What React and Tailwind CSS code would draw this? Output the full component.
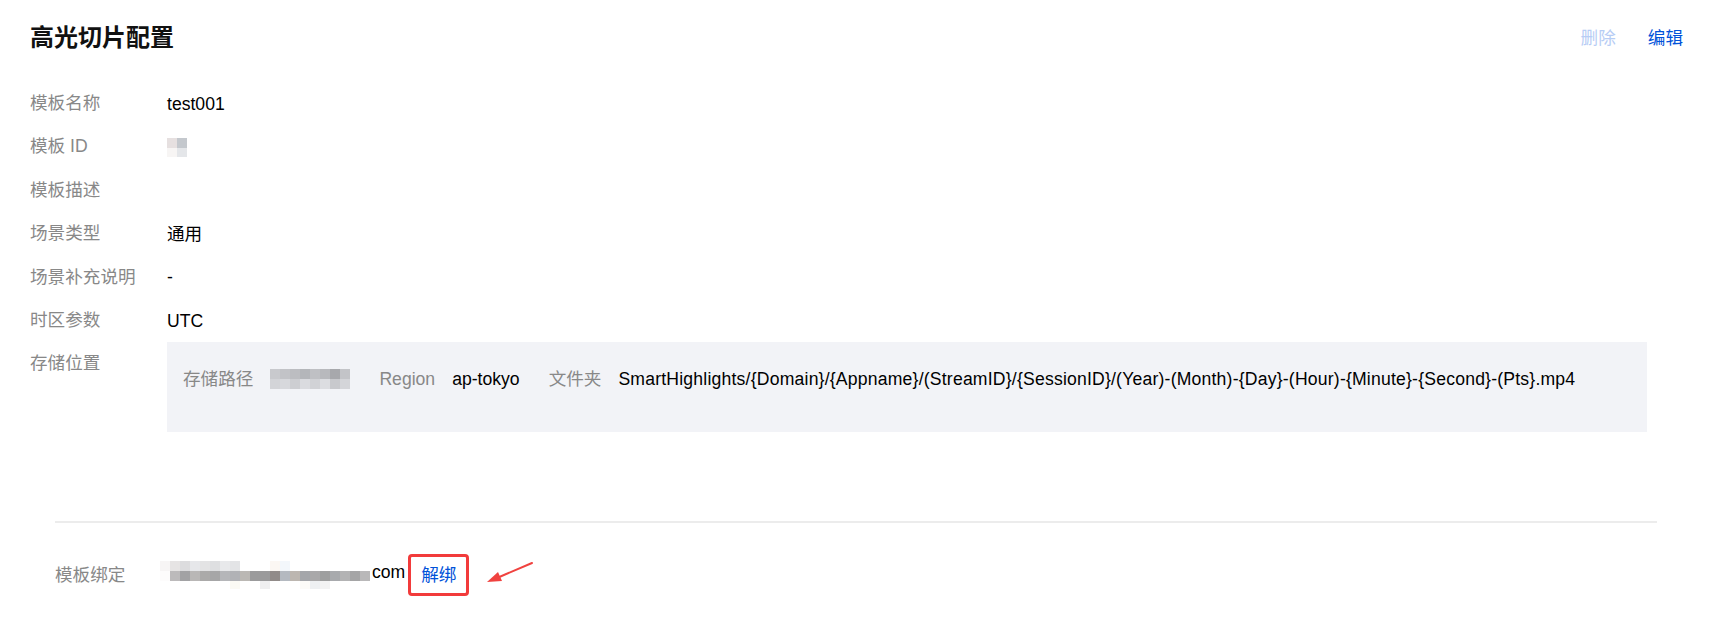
import React from 'react';

const FONT = "font-['Liberation_Sans','Noto_Sans_CJK_SC',sans-serif]";

// pixelated placeholders standing in for masked values
const Mosaic = ({ rows, cell = 10, rowH }) => (
    <div className="flex flex-col">
        {rows.map((row, r) => (
            <div key={r} className="flex">
                {row.map((c, i) => (
                    <div key={i} style={{ width: cell, height: rowH ? rowH[r] : cell, background: c || 'transparent' }} />
                ))}
            </div>
        ))}
    </div>
);

const idMosaic = [
    ['#e6e0e0', '#c4c8cd'],
    ['#f7f5f4', '#e4e6e9'],
];

const pathMosaic = [
    ['#c8c9cd', '#c2c3c7', '#bcbdc1', '#b4b6ba', '#bfc0c4', '#b8b9bd', '#a7a8ac', '#c3c4c8'],
    ['#d3d4d8', '#d7d8dc', '#cdced2', '#dadbdf', '#d1d2d6', '#dcdde1', '#c8c9cd', '#d4d5d9'],
];

const emailMosaic = [
    ['#f7f5f5', '#e6e4e4', '#dcdcde', '#e6e7ea', '#e3e3e4', '#dedfe1', '#e8e9eb', '#e3e4e6', '', '', '', '#fbf7f3', '#f3f7fb', '', '', '', '', '', '', '', ''],
    ['#fdfcfc', '#bcbabb', '#a2a2a4', '#b9b7b6', '#abaaa9', '#a6a6a7', '#b5b6b9', '#b1b2b6', '#bbb8b4', '#9b9b9c', '#9a9a9b', '#918b89', '#b4b9c0', '#bcb6b0', '#a4a6aa', '#a9a8a9', '#9e9f9f', '#a8aaad', '#b3b3b4', '#a5a5a6', '#b9b8b9'],
    ['', '', '', '', '', '', '', '#fbfaf4', '', '', '#efeff0', '', '', '', '#fcfbf8', '#eef0f2', '#f3f3f3', '', '', '', ''],
];

const InfoRow = ({ label, children, top }) => (
    <div className={`flex ${top ? 'items-start' : 'items-center'} min-h-[43.4px]`}>
        <div className="w-[137px] shrink-0 leading-[43.4px] text-[#888888]">{label}</div>
        <div className="flex-1 text-black">{children}</div>
    </div>
);

const StorageItem = ({ label, children }) => (
    <div className="flex items-center gap-[17px]">
        <span className="text-[#888888]">{label}</span>
        <span className="text-black">{children}</span>
    </div>
);

export default function App() {
    return (
        <div className={`w-[1717px] h-[634px] bg-white ${FONT} text-[17.6px] overflow-hidden`}>
            {/* header */}
            <div className="flex items-center justify-between pl-[30px] pr-[34px] pt-[22px]">
                <h1 className="text-[24px] leading-[32px] font-bold text-[#111111]">高光切片配置</h1>
                <div className="flex items-center gap-[32px] leading-[30px]">
                    <span className="text-[#b7cdf5]">删除</span>
                    <span className="text-[#0052d9]">编辑</span>
                </div>
            </div>

            {/* template details */}
            <div className="pl-[30px] mt-[28px]">
                <InfoRow label="模板名称">test001</InfoRow>
                <InfoRow label="模板 ID">
                    <Mosaic rows={idMosaic} rowH={[10, 9]} />
                </InfoRow>
                <InfoRow label="模板描述" />
                <InfoRow label="场景类型">通用</InfoRow>
                <InfoRow label="场景补充说明">-</InfoRow>
                <InfoRow label="时区参数">UTC</InfoRow>
                <InfoRow label="存储位置" top>
                    <div className="w-[1480px] h-[90px] bg-[#f2f3f7] px-[16px] pt-[15px]">
                        <div className="flex items-center gap-[29px] h-[44px]">
                            <StorageItem label="存储路径">
                                <Mosaic rows={pathMosaic} />
                            </StorageItem>
                            <StorageItem label="Region">ap-tokyo</StorageItem>
                            <StorageItem label="文件夹">
                                <span className="tracking-[0.2px]">
                                    SmartHighlights/{'{Domain}'}/{'{Appname}'}/(StreamID}/{'{SessionID}'}/(Year)-(Month)-{'{Day}'}-(Hour)-{'{Minute}'}-{'{Second}'}-(Pts}.mp4
                                </span>
                            </StorageItem>
                        </div>
                    </div>
                </InfoRow>
            </div>

            {/* binding */}
            <div className="ml-[55px] w-[1602px] mt-[89px] border-t-2 border-[#ececec]">
                <div className="flex items-center mt-[30px] h-[44px]">
                    <span className="w-[105px] shrink-0 text-[#888888]">模板绑定</span>
                    <div className="flex items-end">
                        <Mosaic rows={emailMosaic} rowH={[10, 10, 8]} />
                        <span className="text-black leading-[22px] mb-[6px] ml-[2px]">com</span>
                    </div>
                    <div className="ml-[3px] h-[42px] px-[10px] border-[3px] border-[#f23b3b] rounded-[4px] flex items-center text-[#0052d9]">
                        解绑
                    </div>
                    <svg width="50" height="24" viewBox="0 0 50 24" className="ml-[16px] mt-[-4px]">
                        <path d="M47 2 L12 17" stroke="#f0423f" strokeWidth="2" strokeLinecap="round" />
                        <path d="M2 21 L13 11 L17 20 Z" fill="#f0423f" />
                    </svg>
                </div>
            </div>
        </div>
    );
}
